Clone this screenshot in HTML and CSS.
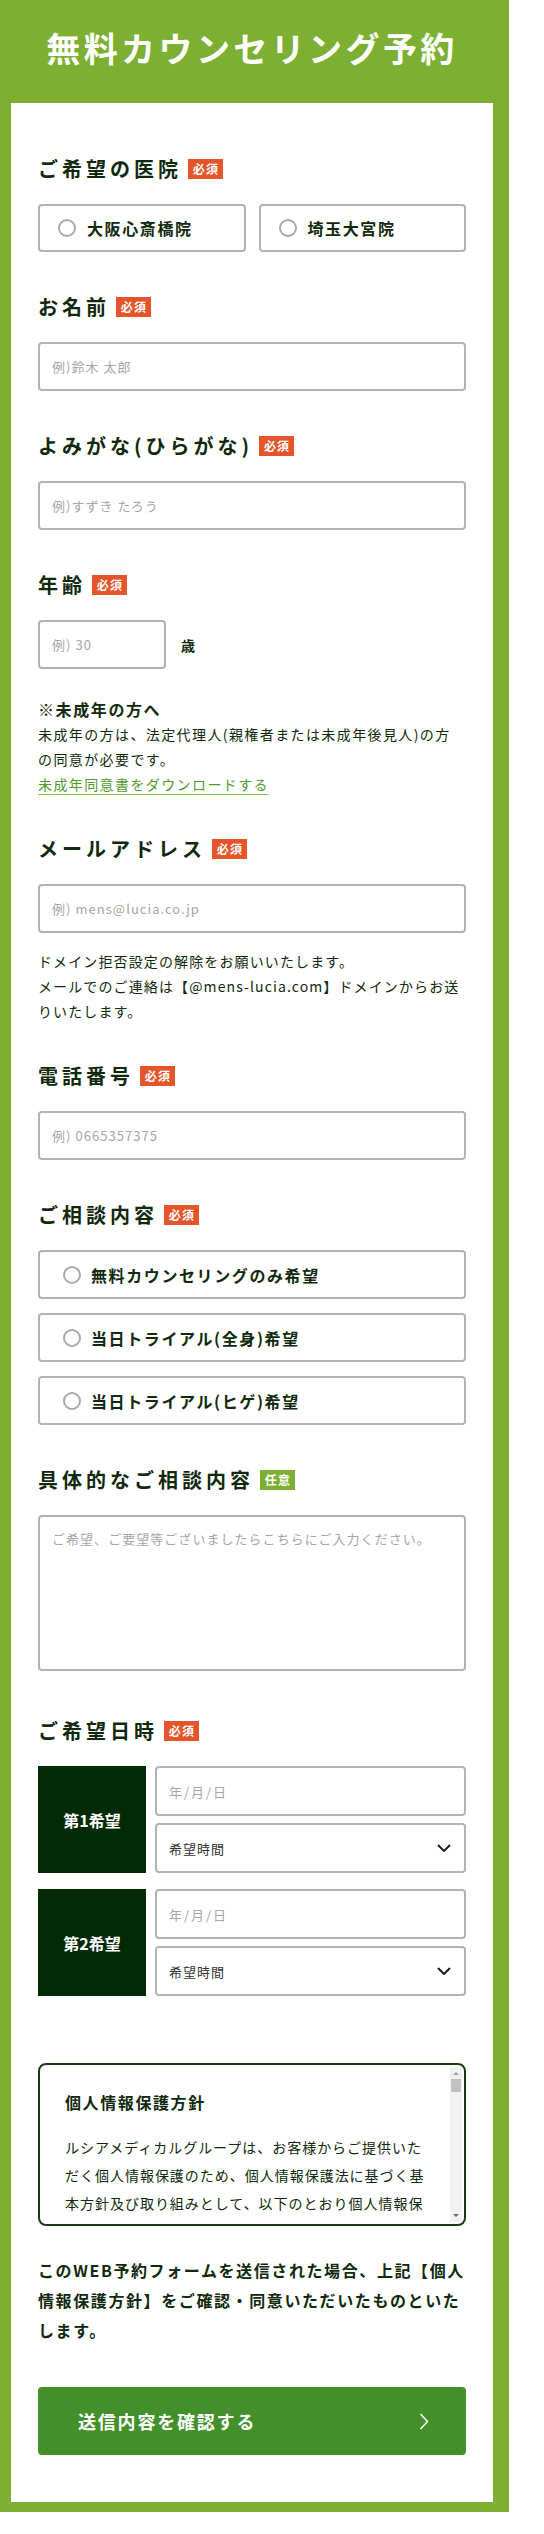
FILE: index.html
```html
<!DOCTYPE html>
<html lang="ja">
<head>
<meta charset="utf-8">
<title>無料カウンセリング予約</title>
<link rel="stylesheet" href="styles.css">
</head>
<body>
<div class="page">
  <h1 class="title">無料カウンセリング予約</h1>
  <form class="card">
    <div class="field">
      <div class="label">ご希望の医院<span class="badge">必須</span></div>
      <div class="choices-two">
        <label class="choice"><span class="radio"></span>大阪心斎橋院</label>
        <label class="choice"><span class="radio"></span>埼玉大宮院</label>
      </div>
    </div>

    <div class="field">
      <div class="label">お名前<span class="badge">必須</span></div>
      <input class="input" type="text" placeholder="例)鈴木 太郎">
    </div>

    <div class="field">
      <div class="label">よみがな(ひらがな)<span class="badge">必須</span></div>
      <input class="input" type="text" placeholder="例)すずき たろう">
    </div>

    <div class="field has-note">
      <div class="label">年齢<span class="badge">必須</span></div>
      <div class="age-row">
        <input class="input age" type="text" placeholder="例) 30">
        <span class="unit">歳</span>
      </div>
      <p class="note-head">※未成年の方へ</p>
      <p class="note">未成年の方は、法定代理人(親権者または未成年後見人)の方の同意が必要です。<br><a class="note-link" href="#">未成年同意書をダウンロードする</a></p>
    </div>

    <div class="field has-note">
      <div class="label">メールアドレス<span class="badge">必須</span></div>
      <input class="input" type="text" placeholder="例) mens@lucia.co.jp">
      <p class="note hint">ドメイン拒否設定の解除をお願いいたします。<br>メールでのご連絡は【@mens-lucia.com】ドメインからお送りいたします。</p>
    </div>

    <div class="field">
      <div class="label">電話番号<span class="badge">必須</span></div>
      <input class="input" type="text" placeholder="例) 0665357375">
    </div>

    <div class="field">
      <div class="label">ご相談内容<span class="badge">必須</span></div>
      <div class="choices">
        <label class="choice"><span class="radio"></span>無料カウンセリングのみ希望</label>
        <label class="choice"><span class="radio"></span>当日トライアル(全身)希望</label>
        <label class="choice"><span class="radio"></span>当日トライアル(ヒゲ)希望</label>
      </div>
    </div>

    <div class="field is-textarea">
      <div class="label">具体的なご相談内容<span class="badge optional">任意</span></div>
      <textarea class="input textarea" placeholder="ご希望、ご要望等ございましたらこちらにご入力ください。"></textarea>
    </div>

    <div class="field is-date">
      <div class="label">ご希望日時<span class="badge">必須</span></div>
      <div class="date-groups">
        <div class="date-group">
          <div class="date-tag">第1希望</div>
          <input class="input date" type="text" placeholder="年/月/日">
          <div class="select-wrap">
            <select class="input select"><option>希望時間</option></select>
            <svg class="chev" viewBox="0 0 14 8" width="14" height="8"><path d="M1 1 L7 7 L13 1" fill="none" stroke="#1e1e1e" stroke-width="2"/></svg>
          </div>
        </div>
        <div class="date-group">
          <div class="date-tag">第2希望</div>
          <input class="input date" type="text" placeholder="年/月/日">
          <div class="select-wrap">
            <select class="input select"><option>希望時間</option></select>
            <svg class="chev" viewBox="0 0 14 8" width="14" height="8"><path d="M1 1 L7 7 L13 1" fill="none" stroke="#1e1e1e" stroke-width="2"/></svg>
          </div>
        </div>
      </div>
    </div>

    <div class="policy">
      <div class="policy-body">
        <h3 class="policy-title">個人情報保護方針</h3>
        <p>ルシアメディカルグループは、お客様からご提供いただく個人情報保護のため、個人情報保護法に基づく基本方針及び取り組みとして、以下のとおり個人情報保護方針を定め、これを遵守いたします。</p>
      </div>
      <div class="scrollbar" aria-hidden="true">
        <span class="sb-arrow up"></span>
        <span class="sb-thumb"></span>
        <span class="sb-arrow down"></span>
      </div>
    </div>

    <p class="agree">このWEB予約フォームを送信された場合、上記【個人情報保護方針】をご確認・同意いただいたものといたします。</p>

    <button class="submit" type="button">
      <span>送信内容を確認する</span>
      <svg class="submit-arrow" viewBox="0 0 10 17" width="10" height="17"><path d="M1.5 1 L8.5 8.5 L1.5 16" fill="none" stroke="#fff" stroke-width="1.6"/></svg>
    </button>
  </form>
</div>
</body>
</html>
```
FILE: styles.css
```css
body {
  margin: 0;
  background: #fff;
  font-family: "Noto Sans CJK JP", "Noto Sans", sans-serif;
  color: #10290c;
}

.page {
  width: 509px;
  box-sizing: border-box;
  background: #7daf32;
  padding: 0 16px 10px 11px;
}

.title {
  margin: 0;
  padding: 28px 0 35px;
  font-size: 34px;
  line-height: 40px;
  font-weight: 700;
  color: #fff;
  text-align: center;
  letter-spacing: 0.1em;
}

.card {
  display: block;
  background: #fff;
  padding: 51px 27px 47px;
}

.field {
  margin-bottom: 40px;
}
.field.has-note {
  margin-bottom: 37px;
}
.field.is-textarea {
  margin-bottom: 45px;
}
.field.is-date {
  margin-bottom: 67px;
}

.label {
  display: flex;
  align-items: center;
  margin: 0 0 20px;
  font-size: 20px;
  line-height: 30px;
  font-weight: 700;
  letter-spacing: 0.2em;
}

.badge {
  display: inline-flex;
  align-items: center;
  justify-content: center;
  width: 35px;
  height: 20px;
  margin-left: 6px;
  padding-left: 1px;
  box-sizing: border-box;
  background: #e6542a;
  color: #fff;
  font-size: 12px;
  line-height: 1;
  font-weight: 700;
  letter-spacing: 0.1em;
}
.badge.optional {
  background: #7daf32;
}

.choices-two {
  display: grid;
  grid-template-columns: 1fr 1fr;
  gap: 13px;
}

.choices {
  display: flex;
  flex-direction: column;
  gap: 14px;
}

.choice {
  display: flex;
  align-items: center;
  height: 48px;
  box-sizing: border-box;
  border: 2px solid #b3b3b3;
  border-radius: 4px;
  padding-left: 18px;
  font-size: 16px;
  font-weight: 700;
  letter-spacing: 0.1em;
  background: #fff;
}
.choices .choice {
  height: 49px;
  padding-left: 23px;
}

.radio {
  flex: none;
  width: 18px;
  height: 18px;
  box-sizing: border-box;
  border: 2px solid #a9a9a9;
  border-radius: 50%;
  margin-right: 11px;
}
.choices .radio {
  margin-right: 10px;
}

.input {
  display: block;
  width: 100%;
  height: 49px;
  box-sizing: border-box;
  margin: 0;
  border: 2px solid #b3b3b3;
  border-radius: 4px;
  padding: 0 12px;
  background: #fff;
  font-family: inherit;
  font-size: 13px;
  letter-spacing: 0.08em;
  color: #333;
  outline: none;
}
.input::placeholder {
  color: #a6a6a6;
}

.age-row {
  display: flex;
  align-items: center;
  gap: 15px;
}
.input.age {
  width: 128px;
}
.unit {
  font-size: 14px;
  font-weight: 700;
}

.note-head {
  margin: 28px 0 0;
  font-size: 16px;
  line-height: 25px;
  font-weight: 700;
  letter-spacing: 0.1em;
}

.note {
  margin: 0;
  font-size: 14px;
  line-height: 25px;
  letter-spacing: 0.1em;
}
.note.hint {
  margin-top: 16px;
  letter-spacing: 0.08em;
}

.note-link {
  color: #4f9a2c;
  text-decoration: underline;
  text-decoration-color: #86c661;
  text-underline-offset: 4px;
}

.textarea {
  height: 156px;
  padding: 12px;
  line-height: 20px;
  resize: none;
}

.date-groups {
  display: flex;
  flex-direction: column;
  gap: 16px;
}

.date-group {
  display: grid;
  grid-template-columns: 108px 1fr;
  grid-template-rows: 50px 50px;
  column-gap: 9px;
  row-gap: 7px;
}

.date-tag {
  grid-row: span 2;
  display: flex;
  align-items: center;
  justify-content: center;
  background: #012a05;
  color: #fff;
  font-size: 16px;
  font-weight: 700;
}

.input.date {
  height: 50px;
  letter-spacing: 0.15em;
}

.select-wrap {
  position: relative;
}
.input.select {
  height: 50px;
  appearance: none;
  -webkit-appearance: none;
  color: #333;
}
.chev {
  position: absolute;
  right: 15px;
  top: 50%;
  margin-top: -4px;
  pointer-events: none;
}

.policy {
  display: flex;
  height: 163px;
  box-sizing: border-box;
  border: 2px solid #1b3a14;
  border-radius: 8px;
  overflow: hidden;
}
.policy-body {
  flex: 1;
  min-width: 0;
  overflow: hidden;
  padding: 25px 20px 0 25px;
}
.policy-title {
  margin: 0 0 19px;
  font-size: 16px;
  line-height: 24px;
  font-weight: 700;
  letter-spacing: 0.1em;
}
.policy-body p {
  margin: 0;
  font-size: 14px;
  line-height: 28px;
  letter-spacing: 0.07em;
}

.scrollbar {
  flex: none;
  display: flex;
  flex-direction: column;
  align-items: center;
  width: 12px;
  margin: 2px 2px 2px 0;
  background: #f1f1f1;
}
.sb-arrow {
  width: 0;
  height: 0;
  border-left: 3px solid transparent;
  border-right: 3px solid transparent;
}
.sb-arrow.up {
  margin: 5px 0 4px;
  border-bottom: 3px solid #a3a3a3;
}
.sb-arrow.down {
  margin: auto 0 5px;
  border-top: 3px solid #6b6b6b;
}
.sb-thumb {
  width: 10px;
  height: 13px;
  background: #c1c1c1;
}

.agree {
  margin: 29px 0 0;
  font-size: 16px;
  line-height: 30px;
  font-weight: 700;
  letter-spacing: 0.1em;
}

.submit {
  display: flex;
  align-items: center;
  justify-content: space-between;
  width: 100%;
  height: 68px;
  margin-top: 42px;
  border: 0;
  border-radius: 4px;
  padding: 0 37px 0 40px;
  background: #43902a;
  color: #fff;
  font-family: inherit;
  font-size: 18px;
  font-weight: 700;
  letter-spacing: 0.1em;
}
```
